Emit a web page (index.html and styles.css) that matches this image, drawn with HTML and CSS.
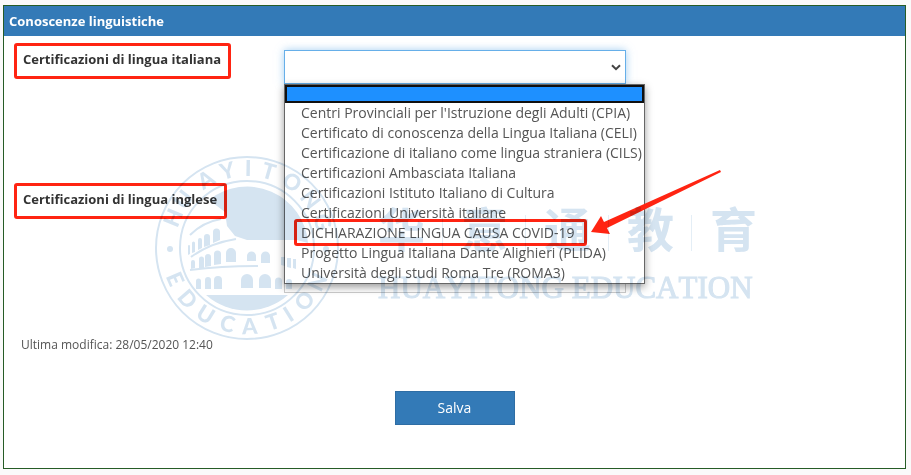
FILE: index.html
```
<!DOCTYPE html>
<html lang="it">
<head>
  <meta charset="UTF-8">
  <meta name="viewport" content="width=device-width, initial-scale=1.0">
  <title>Conoscenze linguistiche</title>
  <link rel="stylesheet" href="styles.css">
</head>
<body>
  <form class="panel">
    <h1 class="panel-title">Conoscenze linguistiche</h1>

    <div class="panel-body">
      <div class="form-row">
        <div class="label-col">
          <label class="marked" for="italiano">Certificazioni di lingua italiana</label>
        </div>
        <div class="field-col">
          <select id="italiano" class="field open">
            <option></option>
          </select>
          <svg class="chevron" viewBox="0 0 10 7" aria-hidden="true"><path d="M1 1.2l4 4 4-4"/></svg>

          <ul class="options" role="listbox" aria-label="Certificazioni di lingua italiana">
            <li class="option selected" role="option" aria-selected="true"></li>
            <li class="option" role="option">Centri Provinciali per l'Istruzione degli Adulti (CPIA)</li>
            <li class="option" role="option">Certificato di conoscenza della Lingua Italiana (CELI)</li>
            <li class="option" role="option">Certificazione di italiano come lingua straniera (CILS)</li>
            <li class="option" role="option">Certificazioni Ambasciata Italiana</li>
            <li class="option" role="option">Certificazioni Istituto Italiano di Cultura</li>
            <li class="option" role="option">Certificazioni Università italiane</li>
            <li class="option option-marked" role="option">DICHIARAZIONE LINGUA CAUSA COVID-19</li>
            <li class="option" role="option">Progetto Lingua Italiana Dante Alighieri (PLIDA)</li>
            <li class="option" role="option">Università degli studi Roma Tre (ROMA3)</li>
          </ul>
        </div>
      </div>

      <div class="form-row">
        <div class="label-col">
          <label class="marked" for="inglese">Certificazioni di lingua inglese</label>
        </div>
        <div class="field-col">
          <textarea id="inglese" class="field area"></textarea>
        </div>
      </div>

      <p class="updated">Ultima modifica: 28/05/2020 12:40</p>

      <div class="actions">
        <button class="save" type="button">Salva</button>
      </div>
    </div>
  </form>

  <svg class="arrow" viewBox="0 0 132 66" aria-hidden="true">
    <path d="M1 63L11 47L14 53L130 1L131 3L17 59L20 65Z"/>
  </svg>

  <!-- watermark: seal -->
  <svg class="seal" viewBox="-93 -93 186 186" aria-hidden="true">
    <defs>
      <path id="arcTop" d="M-72 0A72 72 0 0 1 72 0"/>
      <path id="arcBottom" d="M-86 0A86 86 0 0 0 86 0"/>
    </defs>
    <circle class="ring" r="91"/>
    <circle class="ring" r="67"/>
    <text class="seal-text" x="28 47 74 95 114 133 156 179 202"><textPath href="#arcTop">HUAYITONG</textPath></text>
    <text class="seal-text" x="35 61 87 113 138 164 183 206 231"><textPath href="#arcBottom">EDUCATION</textPath></text>
    <circle cx="-77" cy="1" r="3"/>
    <circle cx="79" cy="1" r="3"/>
    <!-- sky and ground -->
    <path d="M-38 -48A61 61 0 0 1 61 -5L50 -8H0L-12 -12L-20 -22L-22 -36Z"/>
    <path d="M-41 47H41A62 62 0 0 1 -41 47Z"/>
    <!-- floors -->
    <path class="floor" d="M-57 -13Q-44 -26 -26 -29M-56 9Q-37 -5 -11 -9M-57 22Q-25 18 11 18"/>
    <!-- top arches -->
    <path d="M-59 7V-2a1 1 0 0 1 2 0V6ZM-55 5V-5a1.5 1.5 0 0 1 3 0V4ZM-49 2V-8a2 2 0 0 1 4 0V0ZM-43 -1V-11a3 3 0 0 1 6 0V-3ZM-34 -5V-16a3.5 3.5 0 0 1 7 0V-8Z"/>
    <!-- middle arches -->
    <path d="M-56 21V14a2 2 0 0 1 4 0V20ZM-48 20V11a2.5 2.5 0 0 1 5 0V20ZM-42 19V9a3 3 0 0 1 6 0V18ZM-33 17V6a3.5 3.5 0 0 1 7 0V16ZM-21 14V5a5 5 0 0 1 10 0V14ZM0 13V8a4 4 0 0 1 9 0V13ZM14 15V8a4 4 0 0 1 9 0V15ZM34 17V9h4V18ZM40 19V10h4V20ZM46 20V11h3V21Z"/>
    <!-- bottom arches -->
    <path d="M-51 41V33a2.5 2.5 0 0 1 5 0V41ZM-42 41V32a3 3 0 0 1 6 0V41ZM-33 41V32a4 4 0 0 1 8 0V41ZM-6 40V32a6 6 0 0 1 12 0V40ZM12 40V32a6 6 0 0 1 12 0V40ZM28 41V33a3.5 3.5 0 0 1 7 0V41ZM39 41V34a3 3 0 0 1 6 0V41Z"/>
  </svg>

  <!-- watermark: name -->
  <div class="brand" aria-hidden="true">
    <div class="brand-cn"><span>华</span><span>意</span><span>通</span><span>教</span><span>育</span></div>
    <div class="brand-en">HUAYITONG EDUCATION</div>
  </div>
</body>
</html>
```
FILE: styles.css
```
* {
  margin: 0;
  padding: 0;
  box-sizing: border-box;
}

body {
  font-family: "Open Sans", "Noto Sans", sans-serif;
  font-size: 14px;
  line-height: 20px;
  color: #555;
  background: #fafafa;
  padding: 5px 5px 5px 3px;
  position: relative;
}

.panel {
  background: #fff;
  border: 1px solid #265c26;
}

.panel-title {
  background: #337ab7;
  color: #fff;
  font-size: 13px;
  font-weight: 700;
  line-height: 30px;
  padding: 0 5px;
}

.panel-body {
  padding: 7px 10px 43px;
}

.form-row {
  display: flex;
  min-height: 140px;
}

.label-col {
  flex: 0 0 270px;
}

.marked {
  display: inline-block;
  border: 3px solid #ff2412;
  border-radius: 3px;
  padding: 3px 7px 7px 6px;
  color: #333;
  font-size: 13px;
  font-weight: 700;
}

.field-col {
  position: relative;
  flex: 0 1 342px;
  padding-top: 7px;
}

.field {
  display: block;
  width: 100%;
  height: 34px;
  padding: 6px 12px;
  border: 1px solid #ccc;
  background: #fff;
  color: #555;
  font: inherit;
  appearance: none;
  outline: none;
}

.field.open {
  border-color: #66afe9;
  box-shadow: 0 0 8px rgba(102, 175, 233, 0.6);
}

.field.area {
  height: 103px;
  resize: none;
}

.chevron {
  position: absolute;
  top: 21px;
  right: 5px;
  width: 10px;
  height: 7px;
  fill: none;
  stroke: #444;
  stroke-width: 2;
}

.options {
  position: absolute;
  top: 41px;
  left: 0;
  z-index: 1;
  list-style: none;
  white-space: nowrap;
  background: #fff;
  border: 1px solid #666;
  box-shadow: 0 3px 8px rgba(0, 0, 0, 0.4);
}

.option {
  padding: 0 2px 0 16px;
}

.option.selected {
  height: 18px;
  background: #1e90ff;
  border: 2px solid #101010;
}

.option-marked {
  position: relative;
}

.option-marked::after {
  content: "";
  position: absolute;
  inset: -4px 57px -3px 9px;
  border: 3px solid #ff2412;
  border-radius: 3px;
}

.updated {
  padding-left: 7px;
  font-size: 12px;
  margin-top: 12px;
}

.actions {
  display: flex;
  justify-content: center;
  margin-top: 36px;
}

.save {
  width: 120px;
  height: 34px;
  border: 1px solid #2e6da4;
  background: #337ab7;
  color: #fff;
  font: inherit;
}

.arrow {
  position: absolute;
  top: 169px;
  left: 590px;
  z-index: 2;
  width: 132px;
  height: 66px;
  fill: #ff2412;
}

.seal,
.brand {
  position: absolute;
  z-index: 3;
  mix-blend-mode: multiply;
  pointer-events: none;
}

.seal {
  top: 155px;
  left: 154px;
  width: 186px;
  height: 186px;
  fill: #d5e4f1;
}

.ring {
  fill: none;
  stroke: #d5e4f1;
  stroke-width: 2;
}

.floor {
  fill: none;
  stroke: #d5e4f1;
  stroke-width: 2;
}

.seal-text {
  font-family: Lato, sans-serif;
  font-size: 22px;
  font-weight: 900;
  text-anchor: middle;
}

.brand {
  top: 199px;
  left: 378px;
  color: #d5e4f1;
}

.brand-cn {
  display: flex;
  gap: 36px;
  font-family: "Noto Sans CJK SC", sans-serif;
  font-size: 47px;
  font-weight: 700;
  line-height: 56px;
}

.brand-cn span {
  position: relative;
}

.brand-cn span + span::before {
  content: "";
  position: absolute;
  top: 16px;
  left: -19px;
  width: 1px;
  height: 36px;
  background: #e4eef6;
}

.brand-en {
  font-family: "Liberation Serif", serif;
  font-size: 31px;
  font-kerning: none;
  line-height: 34px;
  margin-top: 16px;
  white-space: nowrap;
  -webkit-text-stroke: 1px #d5e4f1;
}
```
